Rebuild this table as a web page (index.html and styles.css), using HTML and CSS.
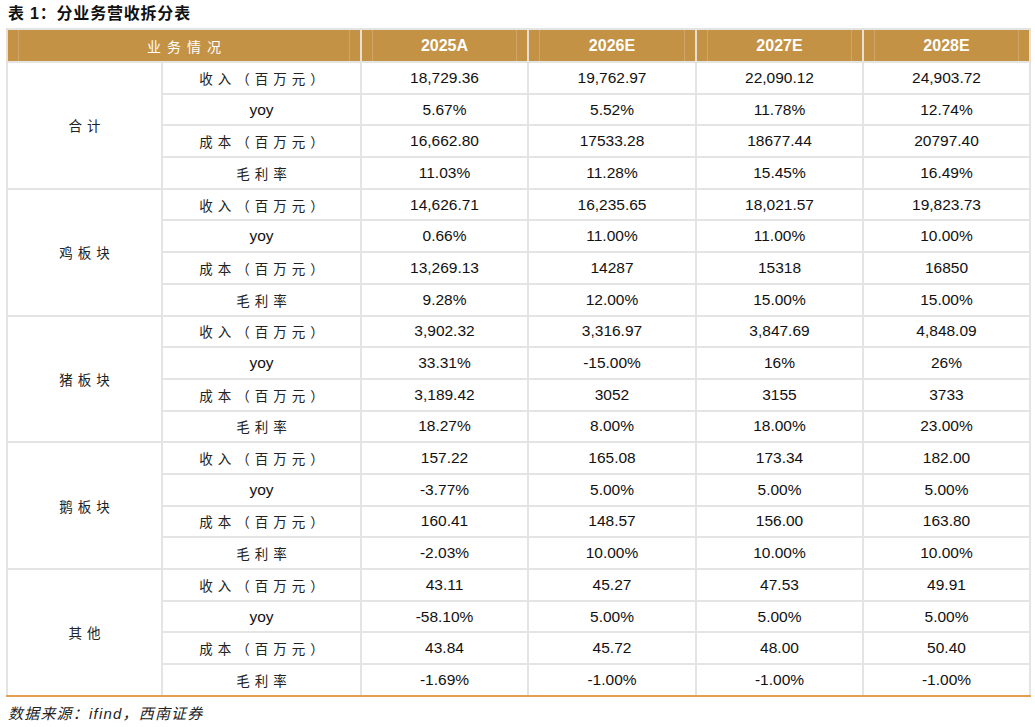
FILE: index.html
```html
<!DOCTYPE html>
<html lang="zh">
<head>
<meta charset="utf-8">
<link rel="stylesheet" href="styles.css">
</head>
<body>
<div class="page">
  <div class="title">表 1：分业务营收拆分表</div>
  <table class="tbl">
    <colgroup>
      <col class="c1"><col class="c2"><col class="c3"><col class="c4"><col class="c5"><col class="c6">
    </colgroup>
    <thead>
      <tr>
        <th colspan="2" class="cn">业务情况</th>
        <th>2025A</th><th>2026E</th><th>2027E</th><th>2028E</th>
      </tr>
    </thead>
    <tbody>
      <tr><td rowspan="4" class="cn grp">合计</td><td class="cn">收入（百万元）</td><td>18,729.36</td><td>19,762.97</td><td>22,090.12</td><td>24,903.72</td></tr>
      <tr><td>yoy</td><td>5.67%</td><td>5.52%</td><td>11.78%</td><td>12.74%</td></tr>
      <tr><td class="cn">成本（百万元）</td><td>16,662.80</td><td>17533.28</td><td>18677.44</td><td>20797.40</td></tr>
      <tr><td class="cn">毛利率</td><td>11.03%</td><td>11.28%</td><td>15.45%</td><td>16.49%</td></tr>

      <tr><td rowspan="4" class="cn grp">鸡板块</td><td class="cn">收入（百万元）</td><td>14,626.71</td><td>16,235.65</td><td>18,021.57</td><td>19,823.73</td></tr>
      <tr><td>yoy</td><td>0.66%</td><td>11.00%</td><td>11.00%</td><td>10.00%</td></tr>
      <tr><td class="cn">成本（百万元）</td><td>13,269.13</td><td>14287</td><td>15318</td><td>16850</td></tr>
      <tr><td class="cn">毛利率</td><td>9.28%</td><td>12.00%</td><td>15.00%</td><td>15.00%</td></tr>

      <tr><td rowspan="4" class="cn grp">猪板块</td><td class="cn">收入（百万元）</td><td>3,902.32</td><td>3,316.97</td><td>3,847.69</td><td>4,848.09</td></tr>
      <tr><td>yoy</td><td>33.31%</td><td>-15.00%</td><td>16%</td><td>26%</td></tr>
      <tr><td class="cn">成本（百万元）</td><td>3,189.42</td><td>3052</td><td>3155</td><td>3733</td></tr>
      <tr><td class="cn">毛利率</td><td>18.27%</td><td>8.00%</td><td>18.00%</td><td>23.00%</td></tr>

      <tr><td rowspan="4" class="cn grp">鹅板块</td><td class="cn">收入（百万元）</td><td>157.22</td><td>165.08</td><td>173.34</td><td>182.00</td></tr>
      <tr><td>yoy</td><td>-3.77%</td><td>5.00%</td><td>5.00%</td><td>5.00%</td></tr>
      <tr><td class="cn">成本（百万元）</td><td>160.41</td><td>148.57</td><td>156.00</td><td>163.80</td></tr>
      <tr><td class="cn">毛利率</td><td>-2.03%</td><td>10.00%</td><td>10.00%</td><td>10.00%</td></tr>

      <tr><td rowspan="4" class="cn grp grp-last">其他</td><td class="cn">收入（百万元）</td><td>43.11</td><td>45.27</td><td>47.53</td><td>49.91</td></tr>
      <tr><td>yoy</td><td>-58.10%</td><td>5.00%</td><td>5.00%</td><td>5.00%</td></tr>
      <tr><td class="cn">成本（百万元）</td><td>43.84</td><td>45.72</td><td>48.00</td><td>50.40</td></tr>
      <tr class="last"><td class="cn">毛利率</td><td>-1.69%</td><td>-1.00%</td><td>-1.00%</td><td>-1.00%</td></tr>
    </tbody>
  </table>
  <div class="source">数据来源：ifind，西南证券</div>
</div>
</body>
</html>
```

FILE: styles.css
```css
html, body {
  margin: 0;
  padding: 0;
  background: #ffffff;
}
body {
  font-family: "Liberation Sans", Arial, "Noto Sans CJK SC", sans-serif;
  color: #111;
}
.page {
  padding: 4px 6px 0 6px;
  width: 1023px;
}
.title {
  font-family: "Liberation Sans", "Noto Sans CJK SC", sans-serif;
  font-weight: bold;
  font-size: 16px;
  line-height: 20px;
  height: 24px;
  padding-left: 2px;
  letter-spacing: 0.8px;
}
.tbl {
  width: 1023px;
  border-collapse: collapse;
  table-layout: fixed;
  border-top: 2px solid #e4e4e4;
  border-left: 2px solid #e4e4e4;
  border-right: 2px solid #e4e4e4;
}
.c1 { width: 155px; }
.c2 { width: 199px; }
.c3 { width: 167px; }
.c4 { width: 168px; }
.c5 { width: 167px; }
.c6 { width: 167px; }
.tbl th {
  background-color: #c49245;
  background-image:
    linear-gradient(to right, transparent 10px, rgba(255,255,255,0.18) 10px, rgba(255,255,255,0.18) 11px, transparent 11px),
    linear-gradient(to left, transparent 10px, rgba(255,255,255,0.18) 10px, rgba(255,255,255,0.18) 11px, transparent 11px);
  color: #fff;
  font-weight: bold;
  font-size: 16px;
  height: 31px;
  padding: 0;
  text-align: center;
  border-left: 2px solid #e8e0d4;
  border-right: 2px solid #e8e0d4;
}
.tbl th.cn {
  font-family: "Noto Sans CJK SC", sans-serif;
  font-weight: normal;
  font-size: 14px;
  letter-spacing: 6px;
  text-indent: 6px;
}
.tbl tbody tr {
  height: 31.7px;
}
.tbl td {
  border: 2px solid #e4e4e4;
  text-align: center;
  font-size: 15.5px;
  padding: 0;
  color: #111;
}
.tbl td.cn {
  font-family: "Noto Sans CJK SC", sans-serif;
  font-size: 13.5px;
  letter-spacing: 5px;
  text-indent: 5px;
  color: #222;
}
.tbl tr.last td,
.tbl td.grp-last {
  border-bottom: 2px solid #e0a050;
}
.source {
  font-family: "Liberation Sans", "Noto Sans CJK SC", sans-serif;
  font-style: italic;
  font-size: 15px;
  line-height: 20px;
  padding: 7px 0 0 2px;
  letter-spacing: 1.2px;
  color: #222;
}
```
